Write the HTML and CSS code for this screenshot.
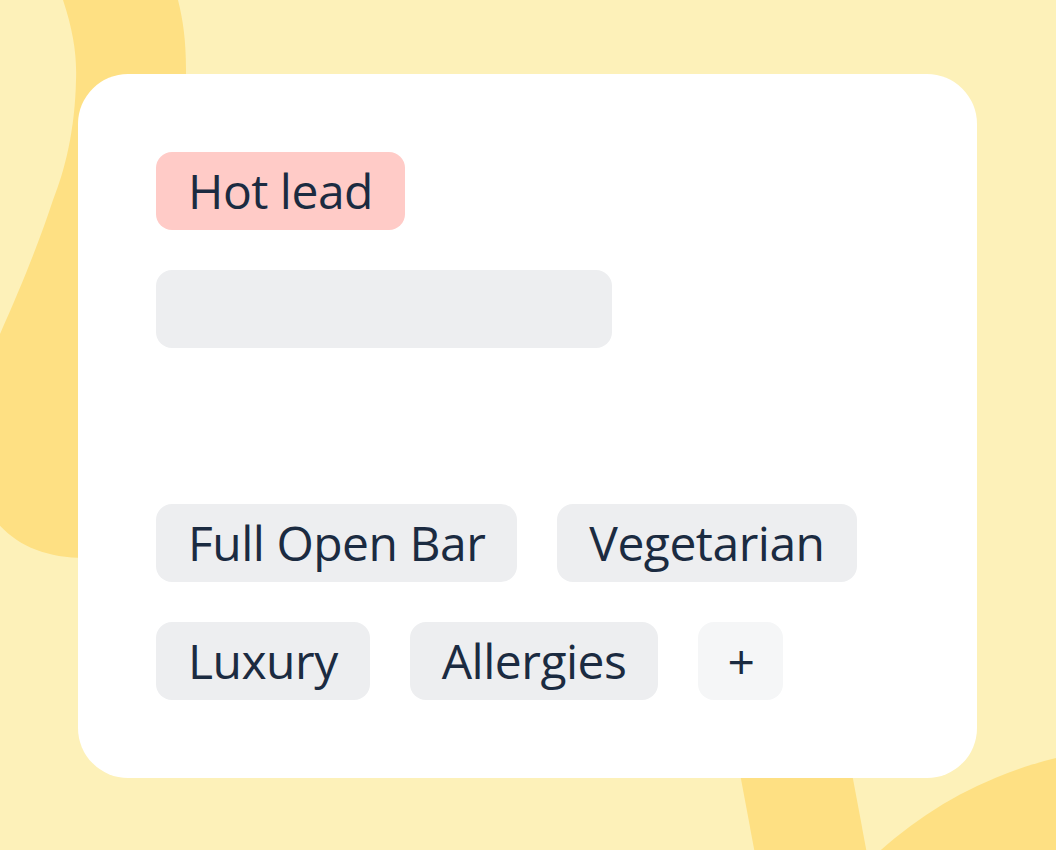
FILE: index.html
```html
<!DOCTYPE html>
<html lang="en">
<head>
    <meta charset="UTF-8">
    <meta name="viewport" content="width=device-width, initial-scale=1.0">
    <title>Lead tags</title>
    <link rel="stylesheet" href="styles.css">
</head>
<body>
    <svg class="backdrop" width="1056" height="850" viewBox="0 0 1056 850" aria-hidden="true">
        <path d="M63,0 C73,30 77,55 76,80 C75,130 65,170 53,200 C40,240 20,290 -5,345 L-5,520 C15,545 45,558 85,558 L186,558 L186,70 C186,40 183,20 178,0 Z" />
        <polygon points="730,720 842,720 870,870 758,870" />
        <circle cx="1150" cy="1150" r="403" />
    </svg>

    <main class="card">
        <span class="pill pill-hot">Hot lead</span>
        <div class="placeholder"></div>

        <div class="tags">
            <span class="pill">Full Open Bar</span>
            <span class="pill">Vegetarian</span>
            <span class="pill">Luxury</span>
            <span class="pill">Allergies</span>
            <span class="pill pill-add">+</span>
        </div>
    </main>
</body>
</html>
```

FILE: styles.css
```css
* {
    margin: 0;
    padding: 0;
    box-sizing: border-box;
}

body {
    font-family: "Open Sans", "Liberation Sans", sans-serif;
    background-color: #fdf1b9;
    width: 1056px;
    height: 850px;
    overflow: hidden;
    position: relative;
}

.backdrop {
    position: absolute;
    top: 0;
    left: 0;
    fill: #fee083;
}

.card {
    position: relative;
    width: 899px;
    height: 704px;
    margin: 74px 0 0 78px;
    padding: 78px;
    background-color: #ffffff;
    border-radius: 50px;
    display: flex;
    flex-direction: column;
    align-items: flex-start;
}

.pill {
    display: inline-block;
    height: 78px;
    padding: 0 32px;
    line-height: 78px;
    font-size: 48px;
    letter-spacing: -0.5px;
    color: #1b2b41;
    background-color: #edeef0;
    border-radius: 16px;
    white-space: nowrap;
}

.pill-hot {
    background-color: #ffcbc7;
}

.pill-add {
    background-color: #f5f6f7;
    padding: 0 29px;
}

.placeholder {
    width: 456px;
    height: 78px;
    margin-top: 40px;
    background-color: #edeef0;
    border-radius: 16px;
}

.tags {
    margin-top: auto;
    display: flex;
    flex-wrap: wrap;
    gap: 40px;
    width: 720px;
}
```
